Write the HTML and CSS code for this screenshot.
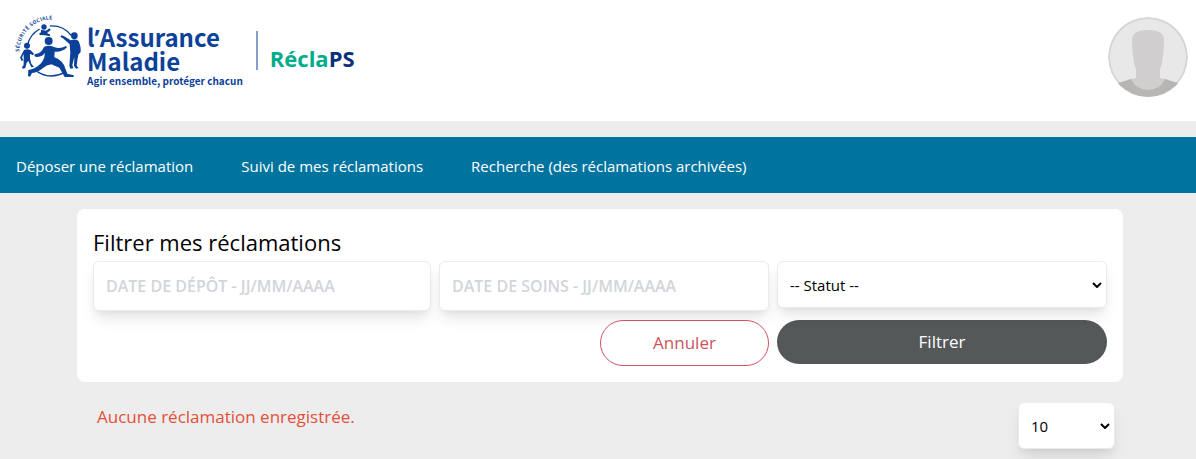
FILE: index.html
```
<!DOCTYPE html>
<html lang="fr">
<head>
  <meta charset="UTF-8" />
  <meta name="viewport" content="width=device-width, initial-scale=1.0" />
  <title>RéclaPS</title>
  <link rel="stylesheet" href="styles.css">
</head>
<body>
  <header class="header">
    <a href="#" class="brand">
      <svg class="brand-logo" viewBox="18 18 216 198" aria-hidden="true">
        <defs>
          <path id="arc" d="M34 132 A97 97 0 0 1 150 36" />
        </defs>
        <text class="logo-text"><textPath href="#arc">SÉCURITÉ SOCIALE</textPath></text>
        <!-- Ring -->
        <g class="logo-ring">
          <path d="M58 112 A75 75 0 0 1 95 63" />
          <path d="M126 54 A75 75 0 0 1 190 83" />
          <path d="M88 191 A75 75 0 0 0 168 194" />
        </g>
        <g class="logo-fill">
          <!-- Runner in the middle -->
          <circle cx="122" cy="99" r="12" />
          <path d="M108 117 Q122 110 138 117 Q156 124 174 114 L177 118 Q163 133 140 131 L139 148 Q158 154 168 171 L178 197 L197 202 L197 207 L170 207 L154 179 L130 169 Q116 171 104 181 Q91 193 72 195 L66 206 L60 204 L61 186 Q83 182 94 170 Q109 159 111 134 Q103 147 84 147 L79 143 L81 138 Q98 139 108 117 Z" />
          <!-- Child on the left -->
          <circle cx="57" cy="113" r="9" />
          <path d="M48 126 Q57 121 67 126 L78 137 L75 142 L66 137 L66 152 L70 167 L78 177 L70 178 L61 159 L56 164 L52 180 L44 182 L42 178 L47 171 L47 138 L42 149 L46 157 L41 159 L36 149 Z" />
          <!-- Baby at the top -->
          <circle cx="108" cy="57" r="8" />
          <path d="M99 65 L114 68 L125 61 L128 66 L117 75 L127 80 L125 85 L111 82 L95 81 L94 76 L99 73 Z" />
          <!-- Adult on the right -->
          <circle cx="199" cy="83" r="10" />
          <path d="M188 97 Q200 91 211 98 Q219 112 218 132 L211 140 L208 157 L206 173 L212 180 L204 182 L198 174 L199 146 L193 171 L196 181 L187 182 L184 173 L187 134 L185 109 L164 90 L157 87 L160 82 L167 84 Z" />
        </g>
      </svg>
      <span class="brand-text">
        <span class="brand-name">l<span class="brand-quote">’</span>Assurance<br>Maladie</span>
        <span class="brand-baseline">Agir ensemble, protéger chacun</span>
      </span>
      <span class="brand-app">Récla<span class="brand-app-ps">PS</span></span>
    </a>
    <button type="button" class="avatar" aria-label="Mon compte">
      <svg viewBox="0 0 80 80" aria-hidden="true">
        <clipPath id="round"><circle cx="40" cy="40" r="40" /></clipPath>
        <g clip-path="url(#round)">
          <circle cx="40" cy="40" r="40" fill="#d5d5d5" />
          <circle cx="40" cy="40" r="38" fill="#e8e8e8" />
          <path d="M0 80 V70 L10 66 L23 62 H57 L70 66 L80 70 V80 Z" fill="#b7b6b5" />
          <path d="M28 52 L26 46 Q24 35 24 22 Q25 13 40 13 Q55 13 56 22 Q56 35 54 46 L52 52 V61 L57 62 Q52 73 40 73 Q28 73 23 62 L28 61 Z" fill="#d0cece" />
        </g>
      </svg>
    </button>
  </header>

  <nav class="nav">
    <a href="#">Déposer une réclamation</a>
    <a href="#">Suivi de mes réclamations</a>
    <a href="#">Recherche (des réclamations archivées)</a>
  </nav>

  <main class="content">
    <form class="filter">
      <h1>Filtrer mes réclamations</h1>
      <div class="filter-row">
        <input type="text" class="field" placeholder="DATE DE DÉPÔT - JJ/MM/AAAA" aria-label="Date de dépôt">
        <input type="text" class="field" placeholder="DATE DE SOINS - JJ/MM/AAAA" aria-label="Date de soins">
        <div class="select">
          <select aria-label="Statut">
            <option>-- Statut --</option>
          </select>
          <svg class="chevron" viewBox="0 0 10 6" aria-hidden="true"><path d="M1 1 L5 5 L9 1" /></svg>
        </div>
      </div>
      <div class="filter-actions">
        <button type="reset" class="btn btn-cancel">Annuler</button>
        <button type="button" class="btn btn-submit">Filtrer</button>
      </div>
    </form>

    <div class="results">
      <p class="message">Aucune réclamation enregistrée.</p>
      <div class="select select-small">
        <select aria-label="Nombre de réclamations par page">
          <option>10</option>
        </select>
        <svg class="chevron" viewBox="0 0 10 6" aria-hidden="true"><path d="M1 1 L5 5 L9 1" /></svg>
      </div>
    </div>
  </main>
</body>
</html>
```
FILE: styles.css
```
* {
  box-sizing: border-box;
}
body {
  font-family: "Segoe UI", "Open Sans", "Noto Sans", sans-serif;
  font-size: 15px;
  line-height: 24px;
  margin: 0;
  background: #ededed;
  color: #000;
}
input, select, button {
  font: inherit;
}
.header {
  display: flex;
  justify-content: space-between;
  align-items: flex-start;
  padding: 14px 8px 24px 14px;
  background: #fff;
}
.brand {
  display: flex;
  color: #0c419a;
  text-decoration: none;
}
.brand-logo {
  width: 72px;
  height: 66px;
}
.logo-text {
  font: 700 15px "Noto Sans CJK SC", sans-serif;
  letter-spacing: 1px;
  fill: #0c419a;
}
.logo-ring {
  fill: none;
  stroke: #0c419a;
  stroke-width: 4;
}
.logo-fill {
  fill: #0c419a;
}
.brand-text {
  display: flex;
  flex-direction: column;
  padding: 11px 13px 0 1px;
  font-family: "Noto Sans CJK SC", "Noto Sans", sans-serif;
}
.brand-name {
  font-size: 24px;
  font-weight: 700;
  line-height: 23px;
}
.brand-quote {
  font-family: "Noto Sans", sans-serif;
}
.brand-baseline {
  font-size: 10px;
  font-weight: 700;
  line-height: 18px;
}
.brand-app {
  align-self: flex-start;
  height: 39px;
  margin-top: 17px;
  padding: 12px 0 0 12px;
  border-left: 2px solid #859fcc;
  font-size: 22px;
  font-weight: 700;
  line-height: 30px;
  color: #00ac8c;
}
.brand-app-ps {
  color: #0a2f7c;
}
.avatar {
  width: 80px;
  height: 80px;
  margin-top: 3px;
  padding: 0;
  border: none;
  border-radius: 50%;
  background: none;
  cursor: pointer;
}
.avatar svg {
  display: block;
}
.nav {
  display: flex;
  gap: 48px;
  margin: 16px 0;
  padding: 17px 16px 15px;
  background: #00749f;
}
.nav a {
  color: #fff;
  text-decoration: none;
}
.content {
  margin: 0 73px 0 77px;
}
.filter {
  padding: 16px;
  background: #fff;
  border-radius: 8px;
}
.filter h1 {
  margin: 0;
  padding-bottom: 2px;
  font-size: 22px;
  font-weight: 400;
  line-height: 34px;
}
.filter-row {
  display: grid;
  grid-template-columns: repeat(3, 1fr);
  align-items: start;
}
.filter-row > * + * {
  margin-left: 8px;
}
.field, .select select {
  min-width: 0;
  padding: 0 12px;
  border: 1px solid #ebebeb;
  border-radius: 6px;
  background: #fff;
  box-shadow: 0 10px 15px -3px rgba(0, 0, 0, 0.1), 0 4px 6px -2px rgba(0, 0, 0, 0.05);
}
.field {
  height: 50px;
}
.field::placeholder {
  color: #d1d5db;
  font-size: 16px;
  font-weight: 600;
  opacity: 1;
}
.select {
  position: relative;
}
.select select {
  display: block;
  width: 100%;
  height: 47px;
  color: #000;
  appearance: none;
}
.chevron {
  position: absolute;
  top: 21px;
  right: 5px;
  width: 10px;
  height: 6px;
  fill: none;
  stroke: #000;
  stroke-width: 2;
  pointer-events: none;
}
.filter-actions {
  display: grid;
  grid-template-columns: repeat(6, 1fr);
  align-items: start;
  margin-top: 9px;
}
.btn {
  border-radius: 23px;
  font-size: 17px;
  cursor: pointer;
}
.btn-cancel {
  grid-column: 4;
  height: 46px;
  border: 1px solid #cd5360;
  background: #fff;
  color: #cd5360;
}
.btn-submit {
  grid-column: 5 / 7;
  height: 44px;
  margin-left: 8px;
  border: none;
  background: #545859;
  color: #fff;
}
.results {
  display: flex;
  justify-content: space-between;
  padding: 20px 8px 10px 20px;
}
.message {
  margin: 3px 0 0;
  font-size: 17px;
  color: #e2503a;
}
.select-small {
  width: 97px;
}
```
